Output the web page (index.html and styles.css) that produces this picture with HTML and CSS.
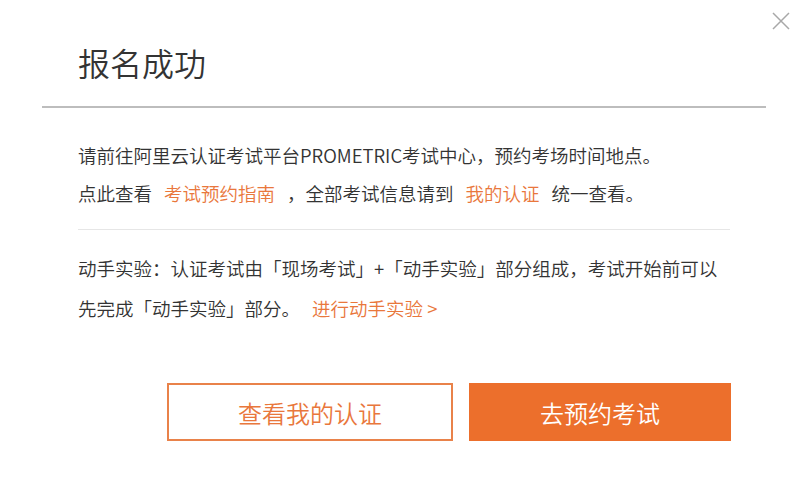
FILE: index.html
```html
<!DOCTYPE html>
<html lang="zh-CN">
<head>
    <meta charset="UTF-8">
    <meta name="viewport" content="width=device-width, initial-scale=1.0">
    <title>报名成功</title>
    <link rel="stylesheet" href="styles.css">
</head>
<body>
    <div class="dialog">
        <a class="close" href="#" aria-label="关闭">
            <svg width="20" height="20" viewBox="0 0 20 20">
                <path d="M2 2 L18 18 M18 2 L2 18" stroke="#a8a8a8" stroke-width="1.5" fill="none"/>
            </svg>
        </a>

        <div class="header">
            <h2 class="title">报名成功</h2>
        </div>

        <div class="content">
            <p class="info">
                请前往阿里云认证考试平台PROMETRIC考试中心，预约考场时间地点。<br>
                点此查看<a class="link" href="#">考试预约指南</a>，全部考试信息请到<a class="link" href="#">我的认证</a>统一查看。
            </p>
            <div class="divider"></div>
            <p class="lab">
                动手实验：认证考试由「现场考试」+「动手实验」部分组成，考试开始前可以<br>
                先完成「动手实验」部分。<a class="link lab-link" href="#">进行动手实验 &gt;</a>
            </p>
        </div>

        <div class="actions">
            <button type="button" class="btn btn-outline">查看我的认证</button>
            <button type="button" class="btn btn-primary">去预约考试</button>
        </div>
    </div>
</body>
</html>
```

FILE: styles.css
```css
body {
    margin: 0;
    padding: 0;
    background-color: #fff;
    font-family: "Noto Sans CJK SC", "Noto Sans", sans-serif;
    font-weight: 350;
    color: #333;
}

.dialog {
    position: relative;
    width: 803px;
    height: 499px;
    box-sizing: border-box;
}

.close {
    position: absolute;
    top: 11px;
    right: 12px;
    display: block;
    width: 20px;
    height: 20px;
}

.header {
    margin: 0 37px 0 42px;
    padding: 40px 0 22px 36px;
    border-bottom: 2px solid #bdbdbd;
}

.title {
    margin: 0;
    font-size: 32px;
    font-weight: 350;
    line-height: 44px;
    color: #333;
}

.content {
    margin: 0 73px 0 78px;
    padding-top: 28px;
}

.info {
    margin: 0;
    font-size: 18.5px;
    line-height: 38px;
}

.lab {
    margin: 0;
    font-size: 18.5px;
    line-height: 40px;
}

.link {
    color: #e9773c;
    text-decoration: none;
    margin: 0 12px;
}

.lab-link {
    margin: 0 0 0 12px;
}

.divider {
    height: 1px;
    background-color: #e6e6e6;
    margin: 17px 0 18px;
}

.actions {
    display: flex;
    justify-content: flex-end;
    gap: 16px;
    margin: 55px 72px 0 0;
}

.btn {
    height: 58px;
    font-family: inherit;
    font-size: 24px;
    font-weight: 350;
    cursor: pointer;
    box-sizing: border-box;
}

.btn-outline {
    width: 286px;
    background-color: #fff;
    color: #e9773c;
    border: 2px solid #e9824a;
}

.btn-primary {
    width: 262px;
    background-color: #ec6f2c;
    color: #fff;
    border: none;
}
```
